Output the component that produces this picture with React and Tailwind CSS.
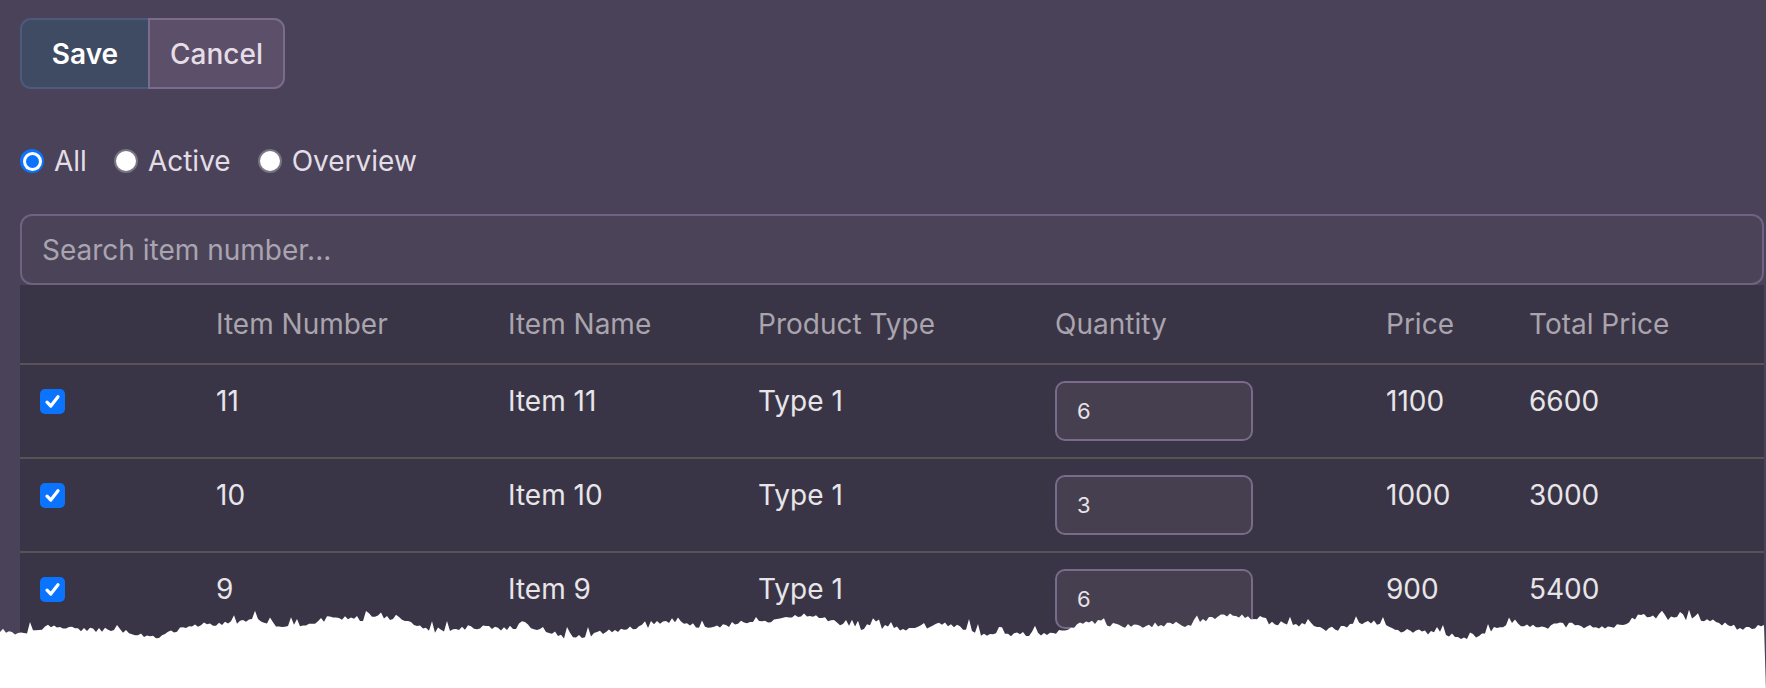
import React from "react";

const rows = [
  { num: "11", name: "Item 11", type: "Type 1", qty: "6", price: "1100", total: "6600" },
  { num: "10", name: "Item 10", type: "Type 1", qty: "3", price: "1000", total: "3000" },
  { num: "9", name: "Item 9", type: "Type 1", qty: "6", price: "900", total: "5400" },
];

const tearPoints = (() => {
  let s = 11;
  const r = () => {
    s = (s * 9301 + 49297) % 233280;
    return s / 233280;
  };
  const pts = [];
  for (let x = 0; x <= 1766; x += 3) {
    const base = 24 + 6 * Math.sin(x / 71) + 4 * Math.sin(x / 23 + 1.3) + 2 * Math.sin(x / 11);
    const spike = r() < 0.18 ? -(r() * 9) : 0;
    const y = base + (r() - 0.5) * 5 + spike;
    pts.push(`${x},${y.toFixed(1)}`);
  }
  return `0,90 ${pts.join(" ")} 1766,90`;
})();

function Check() {
  return (
    <span className="flex h-[25px] w-[25px] items-center justify-center rounded-[5px] bg-[#0b74ff]">
      <svg width="17" height="17" viewBox="0 0 17 17">
        <path d="M3 9.2 L6.8 13 L14 3.8" fill="none" stroke="white" strokeWidth="3.2" strokeLinecap="round" strokeLinejoin="round" />
      </svg>
    </span>
  );
}

function Radio({ checked, label }) {
  return (
    <label className="flex items-center gap-[10px]">
      {checked ? (
        <span className="flex h-[24px] w-[24px] items-center justify-center rounded-full bg-[#0b74ff]">
          <span className="flex h-[19px] w-[19px] items-center justify-center rounded-full bg-white">
            <span className="h-[13px] w-[13px] rounded-full bg-[#0b74ff]" />
          </span>
        </span>
      ) : (
        <span className="h-[24px] w-[24px] rounded-full border-2 border-[#7a7480] bg-white" />
      )}
      <span className="text-[28px] leading-[40px] text-[#e3dee6]">{label}</span>
    </label>
  );
}

const cols = "grid grid-cols-[176px_292px_250px_297px_331px_143px_1fr]";

export default function App() {
  return (
    <div className="relative h-[688px] w-[1766px] overflow-hidden bg-[#4a4259] font-['Inter',sans-serif]">
      <div className="pl-[20px] pr-[2px] pt-[18px]">
        <div className="flex h-[71px]">
          <button className="w-[128px] rounded-l-[11px] border-2 border-r-0 border-[#4b5a7e] bg-[#3f4a63] text-[28px] font-semibold text-white">
            Save
          </button>
          <button className="w-[137px] rounded-r-[11px] border-2 border-[#7b6b8c] bg-[#5c4f69] text-[28px] font-medium text-[#e6dde6]">
            Cancel
          </button>
        </div>

        <div className="mt-[52px] flex h-[40px] items-center gap-[27px]">
          <Radio checked label="All" />
          <Radio label="Active" />
          <Radio label="Overview" />
        </div>

        <div className="mt-[33px] flex h-[71px] items-center rounded-[12px] border-2 border-[#6f6283] bg-[#4b4459] px-[20px]">
          <input
            className="w-full bg-transparent text-[28px] text-[#e6e3e7] outline-none placeholder:text-[#aaa4b0]"
            placeholder="Search item number..."
          />
        </div>

        <div className="bg-[#3a3546]">
          <div className={`${cols} border-b-2 border-[#5b5257] text-[28px] leading-[40px] text-[#a9a4ad]`}>
            <div className="px-[20px] py-[19px]" />
            <div className="px-[20px] py-[19px]">Item Number</div>
            <div className="px-[20px] py-[19px]">Item Name</div>
            <div className="px-[20px] py-[19px]">Product Type</div>
            <div className="px-[20px] py-[19px]">Quantity</div>
            <div className="px-[20px] py-[19px]">Price</div>
            <div className="px-[20px] py-[19px]">Total Price</div>
          </div>
          {rows.map((r) => (
            <div key={r.num} className={`${cols} border-b-2 border-[#5b5257] text-[28px] leading-[40px] text-[#e8e5e9]`}>
              <div className="box-content flex h-[40px] items-center px-[20px] pt-[16px]">
                <Check />
              </div>
              <div className="px-[20px] pt-[16px]">{r.num}</div>
              <div className="px-[20px] pt-[16px]">{r.name}</div>
              <div className="px-[20px] pt-[16px]">{r.type}</div>
              <div className="px-[20px] py-[16px]">
                <input
                  defaultValue={r.qty}
                  className="h-[60px] w-[198px] rounded-[10px] border-2 border-[#7a6b8a] bg-[#463f50] px-[20px] text-[22px] text-[#e6e3e7] outline-none"
                />
              </div>
              <div className="px-[20px] pt-[16px]">{r.price}</div>
              <div className="px-[20px] pt-[16px]">{r.total}</div>
            </div>
          ))}
        </div>
      </div>

      <svg className="absolute left-0 top-[602px]" width="1766" height="90" viewBox="0 0 1766 90">
        <polygon points={tearPoints} fill="white" />
      </svg>
    </div>
  );
}
